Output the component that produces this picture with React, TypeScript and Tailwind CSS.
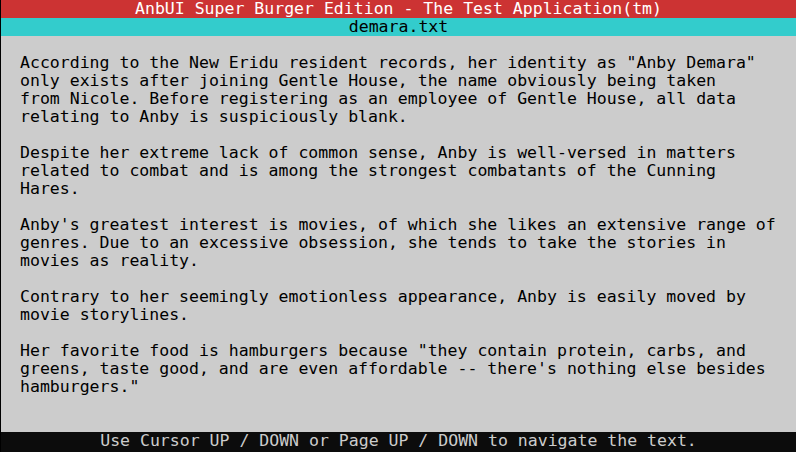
import React from 'react';

const lines: string[] = [
  'According to the New Eridu resident records, her identity as "Anby Demara"',
  'only exists after joining Gentle House, the name obviously being taken',
  'from Nicole. Before registering as an employee of Gentle House, all data',
  'relating to Anby is suspiciously blank.',
  '',
  'Despite her extreme lack of common sense, Anby is well-versed in matters',
  'related to combat and is among the strongest combatants of the Cunning',
  'Hares.',
  '',
  "Anby's greatest interest is movies, of which she likes an extensive range of",
  'genres. Due to an excessive obsession, she tends to take the stories in',
  'movies as reality.',
  '',
  'Contrary to her seemingly emotionless appearance, Anby is easily moved by',
  'movie storylines.',
  '',
  'Her favorite food is hamburgers because "they contain protein, carbs, and',
  "greens, taste good, and are even affordable -- there's nothing else besides",
  'hamburgers."',
];

const App: React.FC = () => {
  return (
    <div
      className="w-[796px] h-[452px] flex flex-col bg-[#0c0c0c] border-l border-black overflow-hidden text-[16.53px] leading-[18px] whitespace-pre"
      style={{ fontFamily: '"DejaVu Sans Mono", "Liberation Mono", monospace' }}
    >
      {/* title bar */}
      <div className="h-[18px] bg-[#cc3333] text-white text-center">
        AnbUI Super Burger Edition - The Test Application(tm)
      </div>
      {/* file name */}
      <div className="h-[18px] bg-[#33cccc] text-black text-center">demara.txt</div>

      {/* text viewer */}
      <div className="h-[396px] bg-[#cccccc] text-black pl-[19px] pt-[18px]">
        {lines.map((l, i) => (
          <div key={i} className="h-[18px]">
            {l}
          </div>
        ))}
      </div>

      {/* status line */}
      <div className="h-[20px] bg-[#0c0c0c] text-[#cccccc] text-center">
        Use Cursor UP / DOWN or Page UP / DOWN to navigate the text.
      </div>
    </div>
  );
};

export default App;
